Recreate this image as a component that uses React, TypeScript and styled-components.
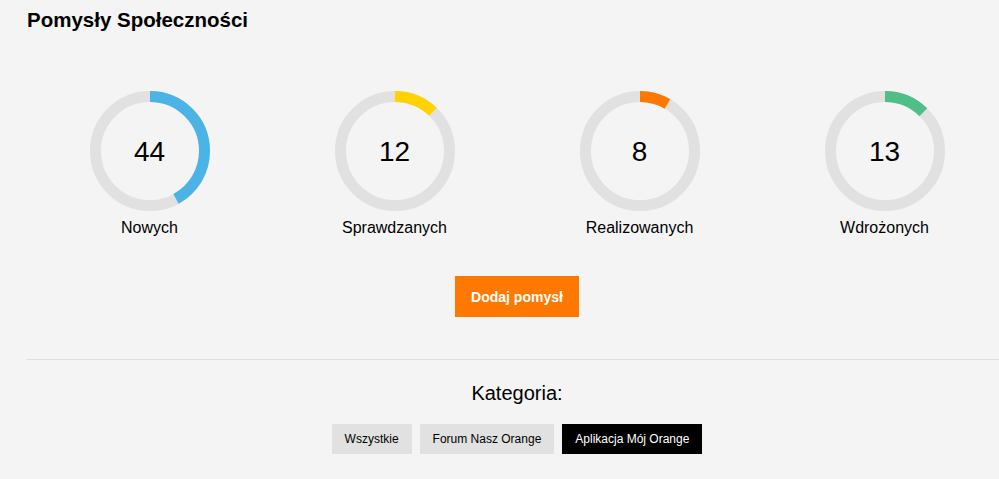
import React from "react";
import styled, { createGlobalStyle } from "styled-components";

const GlobalStyle = createGlobalStyle`
  html, body {
    margin: 0;
    padding: 0;
    background: #f4f4f4;
    overflow: hidden;
    font-family: "Liberation Sans", Arial, sans-serif;
    color: #000;
  }
`;

const Page = styled.div`
  width: 980px;
  padding: 8px 0 25px 27px;
  background: #f4f4f4;
`;

const Title = styled.h2`
  margin: 0;
  font-size: 20.5px;
  line-height: 24px;
  font-weight: 700;
`;

const Stats = styled.div`
  display: grid;
  grid-template-columns: repeat(4, 1fr);
  margin-top: 59px;
`;

const Stat = styled.div`
  display: flex;
  flex-direction: column;
  align-items: center;
`;

const Ring = styled.div`
  display: grid;
  width: 120px;
  height: 120px;
  & > * {
    grid-area: 1 / 1;
  }
`;

const Count = styled.span`
  align-self: center;
  justify-self: center;
  font-size: 28px;
  line-height: 32px;
  padding-top: 1px;
`;

const Label = styled.div`
  margin-top: 8px;
  font-size: 16px;
  line-height: 18px;
`;

const Actions = styled.div`
  display: flex;
  justify-content: center;
  margin-top: 39px;
`;

const AddButton = styled.button`
  height: 41px;
  padding: 0 16px;
  border: none;
  background: #ff7900;
  color: #fff;
  font-family: "Liberation Sans", Arial, sans-serif;
  font-size: 14px;
  font-weight: 700;
  cursor: pointer;
`;

const Divider = styled.hr`
  margin: 42px 0 0;
  border: none;
  border-top: 1px solid #dfdfdf;
  height: 0;
`;

const CategoryTitle = styled.div`
  margin-top: 21px;
  text-align: center;
  font-size: 20px;
  line-height: 24px;
`;

const Filters = styled.div`
  display: flex;
  justify-content: center;
  gap: 8px;
  margin-top: 19px;
`;

const Filter = styled.button<{ $active?: boolean }>`
  height: 30px;
  padding: 0 13px;
  border: none;
  background: ${(p) => (p.$active ? "#000" : "#e1e1e1")};
  color: ${(p) => (p.$active ? "#fff" : "#000")};
  font-family: "Liberation Sans", Arial, sans-serif;
  font-size: 12px;
  cursor: pointer;
`;

type StatItem = { value: number; label: string; color: string; fraction: number };

const stats: StatItem[] = [
  { value: 44, label: "Nowych", color: "#4bb4e6", fraction: 0.42 },
  { value: 12, label: "Sprawdzanych", color: "#ffd200", fraction: 0.122 },
  { value: 8, label: "Realizowanych", color: "#ff7900", fraction: 0.084 },
  { value: 13, label: "Wdrożonych", color: "#50be87", fraction: 0.124 },
];

const R = 54.5;
const C = 2 * Math.PI * R;

function Donut({ color, fraction }: { color: string; fraction: number }) {
  return (
    <svg width="120" height="120" viewBox="0 0 120 120">
      <circle cx="60" cy="60" r={R} fill="none" stroke="#e1e1e1" strokeWidth="11" />
      <circle
        cx="60"
        cy="60"
        r={R}
        fill="none"
        stroke={color}
        strokeWidth="11"
        strokeDasharray={`${C * fraction} ${C}`}
        transform="rotate(-90 60 60)"
      />
    </svg>
  );
}

export default function App() {
  return (
    <>
      <GlobalStyle />
      <Page>
        <Title>Pomysły Społeczności</Title>
        <Stats>
          {stats.map((s) => (
            <Stat key={s.label}>
              <Ring>
                <Donut color={s.color} fraction={s.fraction} />
                <Count>{s.value}</Count>
              </Ring>
              <Label>{s.label}</Label>
            </Stat>
          ))}
        </Stats>
        <Actions>
          <AddButton>Dodaj pomysł</AddButton>
        </Actions>
        <Divider />
        <CategoryTitle>Kategoria:</CategoryTitle>
        <Filters>
          <Filter>Wszystkie</Filter>
          <Filter>Forum Nasz Orange</Filter>
          <Filter $active>Aplikacja Mój Orange</Filter>
        </Filters>
      </Page>
    </>
  );
}
